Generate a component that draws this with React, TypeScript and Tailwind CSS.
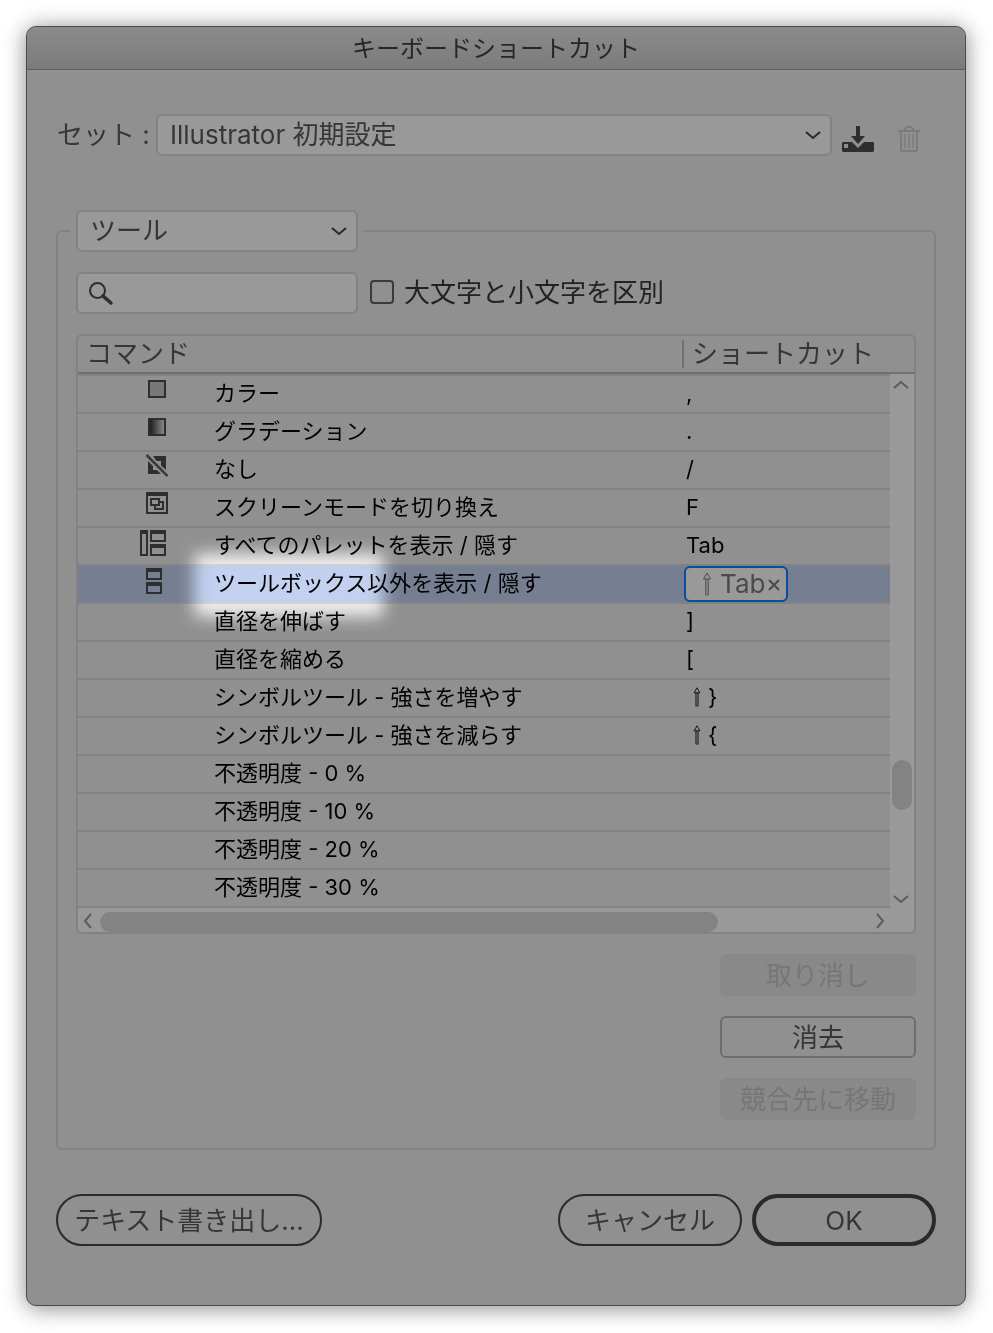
import { useState, type ReactNode } from "react";

type Row = {
  name: string;
  keys: string;
  shift?: boolean;
  icon?: ReactNode;
};

const ColorIcon = () => (
  <svg width="28" height="28" viewBox="0 0 28 28" aria-hidden="true">
    <rect x="9" y="3" width="16" height="16" fill="#787878" stroke="#2e2e2e" strokeWidth="2" />
  </svg>
);

const GradientIcon = () => (
  <svg width="28" height="28" viewBox="0 0 28 28" aria-hidden="true">
    <defs>
      <linearGradient id="swatch">
        <stop offset="0" stopColor="#161616" />
        <stop offset="1" stopColor="#909090" />
      </linearGradient>
    </defs>
    <rect x="9" y="3" width="16" height="16" fill="url(#swatch)" stroke="#2e2e2e" strokeWidth="2" />
  </svg>
);

const NoneIcon = () => (
  <svg width="28" height="28" viewBox="0 0 28 28" aria-hidden="true">
    <path d="M13 2h13v14l-5-4.500V7h-4.500zM8 7l5 5v4h4l4 4H8z" fill="#2e2e2e" />
    <path d="M6.500 1L27.500 22" stroke="#909090" strokeWidth="5" />
    <path d="M6.500 1L27.500 22" stroke="#3a3a3a" strokeWidth="2.500" />
  </svg>
);

const ScreenIcon = () => (
  <svg width="28" height="28" viewBox="0 0 28 28" fill="none" stroke="#2e2e2e" strokeWidth="2" aria-hidden="true">
    <path d="M7 1h20v20H7z" />
    <path d="M6 2h22" strokeWidth="4" />
    <path d="M11 7h8v6h-8zM19 10h4v7h-8v-4" />
  </svg>
);

const PanelsIcon = () => (
  <svg width="28" height="28" viewBox="0 0 28 28" fill="none" stroke="#2e2e2e" strokeWidth="2" aria-hidden="true">
    <path d="M1 1h6v24H1zM11 1h14v10H11zM11 15h14v10H11z" />
    <path d="M0 2h8M10 2h16M10 16h16" strokeWidth="4" />
  </svg>
);

const StackIcon = () => (
  <svg width="28" height="28" viewBox="0 0 28 28" fill="none" stroke="#2e2e2e" strokeWidth="2" aria-hidden="true">
    <path d="M7 1h14v10H7zM7 15h14v10H7z" />
    <path d="M6 2h16M6 16h16" strokeWidth="4" />
  </svg>
);

const ShiftArrow = ({ className }: { className?: string }) => (
  <svg width="10" height="24" viewBox="0 0 10 24" fill="none" stroke="currentColor" className={className} aria-hidden="true">
    <path d="M5 1L1.500 7h7z" />
    <path d="M3.500 7v16h3V7" fill="currentColor" fillOpacity="0.35" strokeOpacity="0.65" />
  </svg>
);

const Chevron = ({ className }: { className?: string }) => (
  <svg width="16" height="10" viewBox="0 0 16 10" fill="none" stroke="currentColor" strokeWidth="2" className={className} aria-hidden="true">
    <path d="M1 2l7 6 7-6" />
  </svg>
);

const rows: Row[] = [
  { name: "カラー", keys: ",", icon: <ColorIcon /> },
  { name: "グラデーション", keys: ".", icon: <GradientIcon /> },
  { name: "なし", keys: "/", icon: <NoneIcon /> },
  { name: "スクリーンモードを切り換え", keys: "F", icon: <ScreenIcon /> },
  { name: "すべてのパレットを表示 / 隠す", keys: "Tab", icon: <PanelsIcon /> },
  { name: "ツールボックス以外を表示 / 隠す", keys: "Tab", shift: true, icon: <StackIcon /> },
  { name: "直径を伸ばす", keys: "]" },
  { name: "直径を縮める", keys: "[" },
  { name: "シンボルツール - 強さを増やす", keys: "}", shift: true },
  { name: "シンボルツール - 強さを減らす", keys: "{", shift: true },
  { name: "不透明度 - 0 %", keys: "" },
  { name: "不透明度 - 10 %", keys: "" },
  { name: "不透明度 - 20 %", keys: "" },
  { name: "不透明度 - 30 %", keys: "" },
];

const selected = 5;

const selectStyle =
  "h-[42px] w-full appearance-none rounded-md border-2 border-[#828282] bg-[#999999] pl-3 pr-10 text-[26px] leading-8 text-[#363636]";
const sideButton = "flex h-[42px] w-[196px] items-center justify-center rounded-md pt-0.5";
const pill = "flex h-[52px] items-center justify-center rounded-full border-[#2a2a2a] pt-0.5";

const App = () => {
  const [shortcut, setShortcut] = useState("Tab");

  return (
    <div className="min-h-screen bg-white py-[26px] pl-[26px] pr-[27px] font-['Inter','Noto_Sans_CJK_JP',sans-serif] text-[26px] leading-8 text-[#363636]">
      <div
        role="dialog"
        aria-labelledby="title"
        className="rounded-[10px] border border-[#4b4b4b] bg-[#909090] shadow-[0_2px_22px_rgba(0,0,0,0.48)]"
      >
        <header className="flex h-[43px] items-center justify-center rounded-t-[9px] border-b border-[#616161] bg-linear-to-b from-[#8b8b8b] to-[#7b7b7b] pt-0.5">
          <h1 id="title" className="text-2xl text-[#262626]">キーボードショートカット</h1>
        </header>

        <main className="px-[29px] pb-[59px] pt-11">
          {/* Key set */}
          <div className="flex items-center">
            <label htmlFor="set" className="w-[100px] shrink-0 pl-px">セット :</label>
            <div className="relative flex-1">
              <select id="set" className={selectStyle}>
                <option>Illustrator 初期設定</option>
              </select>
              <Chevron className="pointer-events-none absolute right-[11px] top-4 text-[#2a2a2a]" />
            </div>
            <button type="button" aria-label="保存" className="ml-2.5 mt-2">
              <svg width="32" height="26" viewBox="0 0 32 26" fill="#2e2e2e" aria-hidden="true">
                <path d="M14 0h4v10h5l-7 8-7-8h5z" />
                <path fillRule="evenodd" d="M1 16h9l6 6 6-6h9l1 1v8l-1 1H1l-1-1v-8zM2 18v4h4v-4z" />
              </svg>
            </button>
            <button type="button" aria-label="削除" disabled className="ml-6 mr-4 mt-2">
              <svg width="22" height="26" viewBox="0 0 22 26" fill="none" stroke="#7b7b7b" strokeWidth="2" aria-hidden="true">
                <path d="M0 5h22M7 5V3l2-2h4l2 2v2M3 5v19l1 1h14l1-1V5" />
                <path d="M7 8v14M11 8v14M15 8v14" strokeWidth="1.500" />
              </svg>
            </button>
          </div>

          <fieldset className="mt-[54px] rounded-md border-2 border-[#828282] px-[18px] pb-7 pt-5">
            <legend className="-ml-1.5 px-1.5">
              <div className="relative w-[282px]">
                <select aria-label="種類" className={selectStyle}>
                  <option>ツール</option>
                </select>
                <Chevron className="pointer-events-none absolute right-[11px] top-4 text-[#2a2a2a]" />
              </div>
            </legend>

            {/* Search */}
            <div className="flex items-center">
              <div className="relative w-[282px]">
                <input
                  type="search"
                  aria-label="検索"
                  className="block h-[42px] w-full rounded-md border-2 border-[#828282] bg-[#999999] pl-10 pr-3"
                />
                <svg width="26" height="26" viewBox="0 0 26 26" fill="none" stroke="#2e2e2e" className="pointer-events-none absolute left-3 top-2" aria-hidden="true">
                  <circle cx="9.500" cy="10.500" r="7.500" strokeWidth="2" />
                  <path d="M15 16l8 7" strokeWidth="3.500" strokeLinecap="round" />
                </svg>
              </div>
              <input
                id="case"
                type="checkbox"
                className="mb-0.5 ml-3 size-6 appearance-none rounded border-2 border-[#3a3a3a] checked:bg-[#3a3a3a]"
              />
              <label htmlFor="case" className="ml-2.5 text-[#222222]">大文字と小文字を区別</label>
            </div>

            {/* Command list */}
            <div className="mt-5 overflow-hidden rounded-md border-2 border-[#828282]">
              <div className="flex">
                <table className="flex-1 table-fixed border-separate border-spacing-0">
                  <colgroup>
                    <col className="w-[136px]" />
                    <col />
                    <col className="w-52" />
                  </colgroup>
                  <thead>
                    <tr>
                      <th colSpan={2} className="h-[38px] border-b-2 border-[#707070] p-0 pl-2 text-left font-normal">
                        <div className="h-8">コマンド</div>
                      </th>
                      <th className="border-b-2 border-[#707070] p-0 text-left font-normal">
                        <div className="flex h-8 items-center">
                          <span className="mr-2 h-7 w-0.5 bg-[#707070]" />
                          <span>ショートカット</span>
                        </div>
                      </th>
                    </tr>
                  </thead>
                  <tbody className="text-[22px] leading-8 text-black">
                    {rows.map((row, i) => (
                      <tr key={row.name} className={i === selected ? "bg-[#767f92]" : ""}>
                        <td className="h-[38px] border-t-2 border-[#828282] p-0 pl-[62px] pt-0.5 align-top">{row.icon}</td>
                        <td className="border-t-2 border-[#828282] p-0">
                          <div className="relative pb-0.5">
                            {row.name}
                            {i === selected && (
                              <span className="pointer-events-none absolute -left-5 -top-3.5 h-16 w-[190px] rounded-md bg-[#646464] mix-blend-color-dodge blur-[8px]" />
                            )}
                          </div>
                        </td>
                        <td className="border-t-2 border-[#828282] p-0">
                          {i === selected ? (
                            <div className="ml-0.5 flex h-9 w-[104px] items-center rounded-md border-2 border-[#0a4d99] bg-[#999999] pl-4 text-[26px] text-[#4a4a4a]">
                              <ShiftArrow className="shrink-0" />
                              <input
                                aria-label="ショートカット"
                                value={shortcut}
                                onChange={(e) => setShortcut(e.target.value)}
                                className="ml-2 w-12 bg-transparent outline-none"
                              />
                              <button type="button" aria-label="クリア" onClick={() => setShortcut("")} className="mt-0.5">
                                <svg width="12" height="12" viewBox="0 0 12 12" stroke="currentColor" strokeWidth="2" aria-hidden="true">
                                  <path d="M1 1l10 10M11 1L1 11" />
                                </svg>
                              </button>
                            </div>
                          ) : (
                            <div className="flex items-center pb-0.5 pl-1">
                              {row.shift && <ShiftArrow className="ml-1.5 mr-1.5 h-5 w-2.5" />}
                              {row.keys}
                            </div>
                          )}
                        </td>
                      </tr>
                    ))}
                  </tbody>
                </table>
                <div className="flex w-6 flex-col">
                  <div className="h-[38px] border-b-2 border-[#707070]" />
                  <div className="flex flex-1 flex-col items-center bg-[#999999] pb-0.5 text-[#5c5c5c]">
                    <Chevron className="mr-0.5 mt-1.5 rotate-180" />
                    <div className="mb-auto mt-[370px] h-[50px] w-5 rounded-full bg-[#838383]" />
                    <Chevron className="mr-0.5" />
                  </div>
                </div>
              </div>
              <div className="flex">
                <div className="h-0.5 flex-1 bg-[#828282]" />
                <div className="w-6 bg-[#999999]" />
              </div>
              <div className="flex h-6 items-center bg-[#999999] pr-6 pt-0.5 text-[#5c5c5c]">
                <Chevron className="ml-0.5 mr-1 rotate-90" />
                <div className="mt-0.5 h-5 w-[618px] rounded-full bg-[#838383]" />
                <Chevron className="ml-auto mr-0.5 -rotate-90" />
              </div>
            </div>

            <div className="mt-5 flex flex-col items-end gap-5">
              <button type="button" disabled className={`${sideButton} bg-[#898989] text-[#767676]`}>取り消し</button>
              <button type="button" className={`${sideButton} border-2 border-[#6d6d6d]`}>消去</button>
              <button type="button" disabled className={`${sideButton} bg-[#898989] text-[#767676]`}>競合先に移動</button>
            </div>
          </fieldset>

          {/* Dialog buttons */}
          <div className="mt-11 flex gap-2.5">
            <button type="button" className={`${pill} mr-auto w-[266px] border-2`}>テキスト書き出し...</button>
            <button type="button" className={`${pill} w-[184px] border-2`}>キャンセル</button>
            <button type="button" className={`${pill} w-[184px] border-4`}>OK</button>
          </div>
        </main>
      </div>
    </div>
  );
};

export default App;
